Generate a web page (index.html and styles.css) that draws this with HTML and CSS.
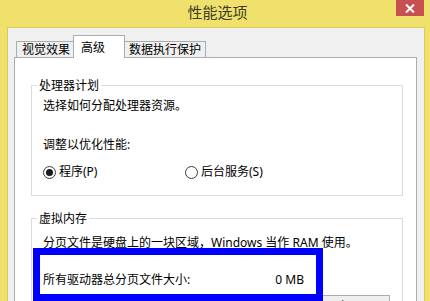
FILE: index.html
```html
<!DOCTYPE html>
<html lang="zh-CN">
<head>
  <meta charset="UTF-8" />
  <title>性能选项</title>
  <link rel="stylesheet" href="styles.css">
</head>
<body>

<div class="window">
  <!-- Title bar -->
  <div class="titlebar">
    <span></span>
    <div class="title">性能选项</div>
    <div class="close">
      <svg width="10" height="9" viewBox="0 0 10 9"><path d="M1 0.5 L9 8.5 M9 0.5 L1 8.5" stroke="#fff" stroke-width="2"/></svg>
    </div>
  </div>

  <div class="client">
    <!-- Tabs -->
    <div class="tabs">
      <div class="tab tab-visual">视觉效果</div>
      <div class="tab tab-adv active">高级</div>
      <div class="tab tab-dep">数据执行保护</div>
    </div>

    <div class="panel">
      <!-- Processor scheduling -->
      <fieldset class="group group-cpu">
        <legend>处理器计划</legend>
        <p class="line first">选择如何分配处理器资源。</p>
        <p class="line adjust">调整以优化性能:</p>
        <div class="radios">
          <label class="radio-item"><span class="radio checked"></span>程序(P)</label>
          <label class="radio-item"><span class="radio"></span>后台服务(S)</label>
        </div>
      </fieldset>

      <!-- Virtual memory -->
      <fieldset class="group group-vm">
        <legend>虚拟内存</legend>
        <p class="line first">分页文件是硬盘上的一块区域，Windows 当作 RAM 使用。</p>
        <div class="size-row">
          <span>所有驱动器总分页文件大小:</span>
          <span>0 MB</span>
        </div>
        <div class="btn-row">
          <button class="button">更改(C)...</button>
        </div>
      </fieldset>
    </div>
  </div>
</div>

<!-- highlight box drawn over the dialog -->
<div class="highlight"></div>

</body>
</html>
```

FILE: styles.css
```css
body {
  margin: 0;
  width: 430px;
  height: 301px;
  overflow: hidden;
  position: relative;
  background: #f0e16c;
  font-family: "Noto Sans", "Noto Sans CJK SC", sans-serif;
  font-size: 12px;
  color: #000;
}
.window {
  padding: 0 5px 0 7px;
  height: 100%;
  display: flex;
  flex-direction: column;
}
.titlebar {
  height: 27px;
  display: grid;
  grid-template-columns: 1fr auto 1fr;
  align-items: start;
}
.title {
  font-family: "Noto Sans CJK SC", sans-serif;
  font-size: 15px;
  line-height: 24px;
  color: #3e3c28;
  padding-left: 3px;
}
.close {
  justify-self: end;
  width: 28px;
  height: 16px;
  margin-right: 1px;
  background: #c75050;
  display: flex;
  align-items: center;
  justify-content: center;
}
.client {
  flex: 1;
  min-height: 0;
  background: #f0f0f0;
  border: 1px solid #d9cb5e;
  border-bottom: none;
  padding-top: 7px;
  display: flex;
  flex-direction: column;
  overflow: hidden;
}
.tabs {
  display: flex;
  align-items: flex-end;
  margin-left: 8px;
}
.tab {
  box-sizing: border-box;
  height: 16px;
  border: 1px solid #acacac;
  border-bottom: none;
  background: #f0f0f0;
  line-height: 14px;
  font-family: "Noto Sans CJK SC", sans-serif;
  white-space: nowrap;
}
.tab-visual { width: 58px; padding-left: 5px; margin-right: -1px; }
.tab-adv { width: 52px; padding-left: 7px; }
.tab-dep { width: 82px; padding-left: 4px; margin-left: -1px; }
.tab.active {
  height: 23px;
  margin-bottom: -1px;
  background: #fff;
  position: relative;
  z-index: 1;
  line-height: 21px;
}
.panel {
  flex: 1;
  margin: 0 7px 0 6px;
  background: #fff;
  border: 1px solid #acacac;
  border-bottom: none;
  padding: 0 13px 0 16px;
}
.group {
  margin: 0;
  padding: 0 0 0 5px;
  border: 1px solid #dcdcdc;
  min-width: 0;
}
.group legend {
  padding: 0 2px;
  margin-left: 0;
  line-height: 16px;
  font-family: "Noto Sans CJK SC", sans-serif;
}
.group-cpu {
  margin-top: 19px;
  padding-bottom: 15px;
}
.group-vm {
  margin-top: 14px;
}
.line {
  margin: 0;
  padding-left: 6px;
  line-height: 16px;
}
.group-cpu .first { margin-top: 5px; }
.group-cpu .adjust { margin-top: 23px; }
.group-vm .first { margin-top: 9px; }
.radios {
  display: grid;
  grid-template-columns: 142px auto;
  margin-top: 11px;
  padding-left: 6px;
  line-height: 16px;
}
.radio-item {
  display: flex;
  align-items: center;
  gap: 3px;
}
.radio {
  box-sizing: border-box;
  width: 13px;
  height: 13px;
  border: 1px solid #3c3c3c;
  border-radius: 50%;
  background: #fff;
  display: flex;
  align-items: center;
  justify-content: center;
}
.radio.checked::after {
  content: "";
  width: 7px;
  height: 7px;
  border-radius: 50%;
  background: #1a1a1a;
}
.size-row {
  display: flex;
  justify-content: space-between;
  width: 261px;
  margin-top: 21px;
  padding-left: 6px;
  line-height: 16px;
}
.btn-row {
  display: flex;
  justify-content: flex-end;
  margin-top: 7px;
  padding-right: 12px;
}
.button {
  width: 85px;
  height: 22px;
  border: 1px solid #acacac;
  background: linear-gradient(#f0f0f0, #e5e5e5);
  font-family: "Noto Sans", "Noto Sans CJK SC", sans-serif;
  font-size: 12px;
  padding: 0;
}
.highlight {
  position: absolute;
  left: 33px;
  top: 248px;
  width: 290px;
  height: 53px;
  box-sizing: border-box;
  border: 7px solid #0000ff;
}
```
